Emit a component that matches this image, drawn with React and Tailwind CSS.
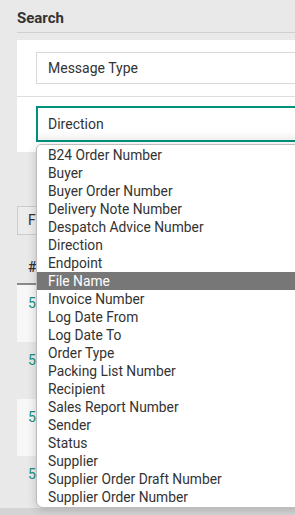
import { useState } from 'react';

const OPTIONS = [
  'B24 Order Number',
  'Buyer',
  'Buyer Order Number',
  'Delivery Note Number',
  'Despatch Advice Number',
  'Direction',
  'Endpoint',
  'File Name',
  'Invoice Number',
  'Log Date From',
  'Log Date To',
  'Order Type',
  'Packing List Number',
  'Recipient',
  'Sales Report Number',
  'Sender',
  'Status',
  'Supplier',
  'Supplier Order Draft Number',
  'Supplier Order Number',
];

const ROWS = ['5421', '5420', '5419', '5418'];

export default function App() {
  const [active, setActive] = useState('File Name');

  return (
    <div className="relative w-[295px] h-[515px] overflow-hidden bg-[#e9e9e9] text-[#333] font-['Roboto',sans-serif]">
      <div className="w-[340px] pl-[17px]">
        {/* Title */}
        <div className="h-[33px] pt-[8px] border-b border-[#cfcfcf] text-[15px] font-bold leading-[20px] text-[#333]">
          Search
        </div>

        {/* Search card */}
        <div className="mt-[7px] bg-white">
          <div className="px-[19px] pt-[12px] pb-[12px] border-b border-[#dedede]">
            <div className="h-[32px] flex items-center px-[11px] border border-[#d9d9d9] text-[14px]">
              Message Type
            </div>
          </div>
          <div className="px-[19px] pt-[9px] pb-[10px]">
            <div className="h-[36px] flex items-center px-[10px] border-2 border-[#00917c] bg-gradient-to-b from-white from-70% to-[#f2f2f2] text-[14px]">
              Direction
            </div>
          </div>
        </div>

        {/* Results behind the menu */}
        <div className="mt-[54px] w-[120px] h-[29px] flex items-center px-[10px] border border-[#cccccc] bg-[#ececec] text-[14px]">
          Filter
        </div>
        <div className="mt-[22px] h-[26px] px-[11px] text-[14px] font-medium">#</div>
        <div className="border-t-2 border-[#8a8a8a]" />
        <div className="flex flex-col">
          {ROWS.map((r, i) => (
            <div
              key={r}
              className={
                i % 2 === 0
                  ? 'h-[57px] px-[11px] pt-[8px] bg-[#f7f7f7] text-[14px] text-[#1a8f80]'
                  : 'h-[57px] px-[11px] pt-[8px] text-[14px] text-[#1a8f80]'
              }
            >
              {r}
            </div>
          ))}
        </div>
      </div>

      {/* Bottom strip */}
      <div className="absolute left-0 right-0 bottom-0 h-[7px] bg-[#d4d4d4]" />

      {/* Dropdown menu */}
      <ul className="absolute left-[36px] top-[144px] w-[300px] py-px bg-white border border-[#bdbdbd] rounded-b-[7px] rounded-tl-[5px] shadow-[0_2px_10px_rgba(0,0,0,0.18)]">
        {OPTIONS.map((o) => (
          <li
            key={o}
            onMouseEnter={() => setActive(o)}
            className={
              o === active
                ? 'h-[18px] leading-[18px] pl-[11px] text-[13.8px] bg-[#777777] text-white'
                : 'h-[18px] leading-[18px] pl-[11px] text-[13.8px] text-[#333]'
            }
          >
            {o}
          </li>
        ))}
      </ul>
    </div>
  );
}
